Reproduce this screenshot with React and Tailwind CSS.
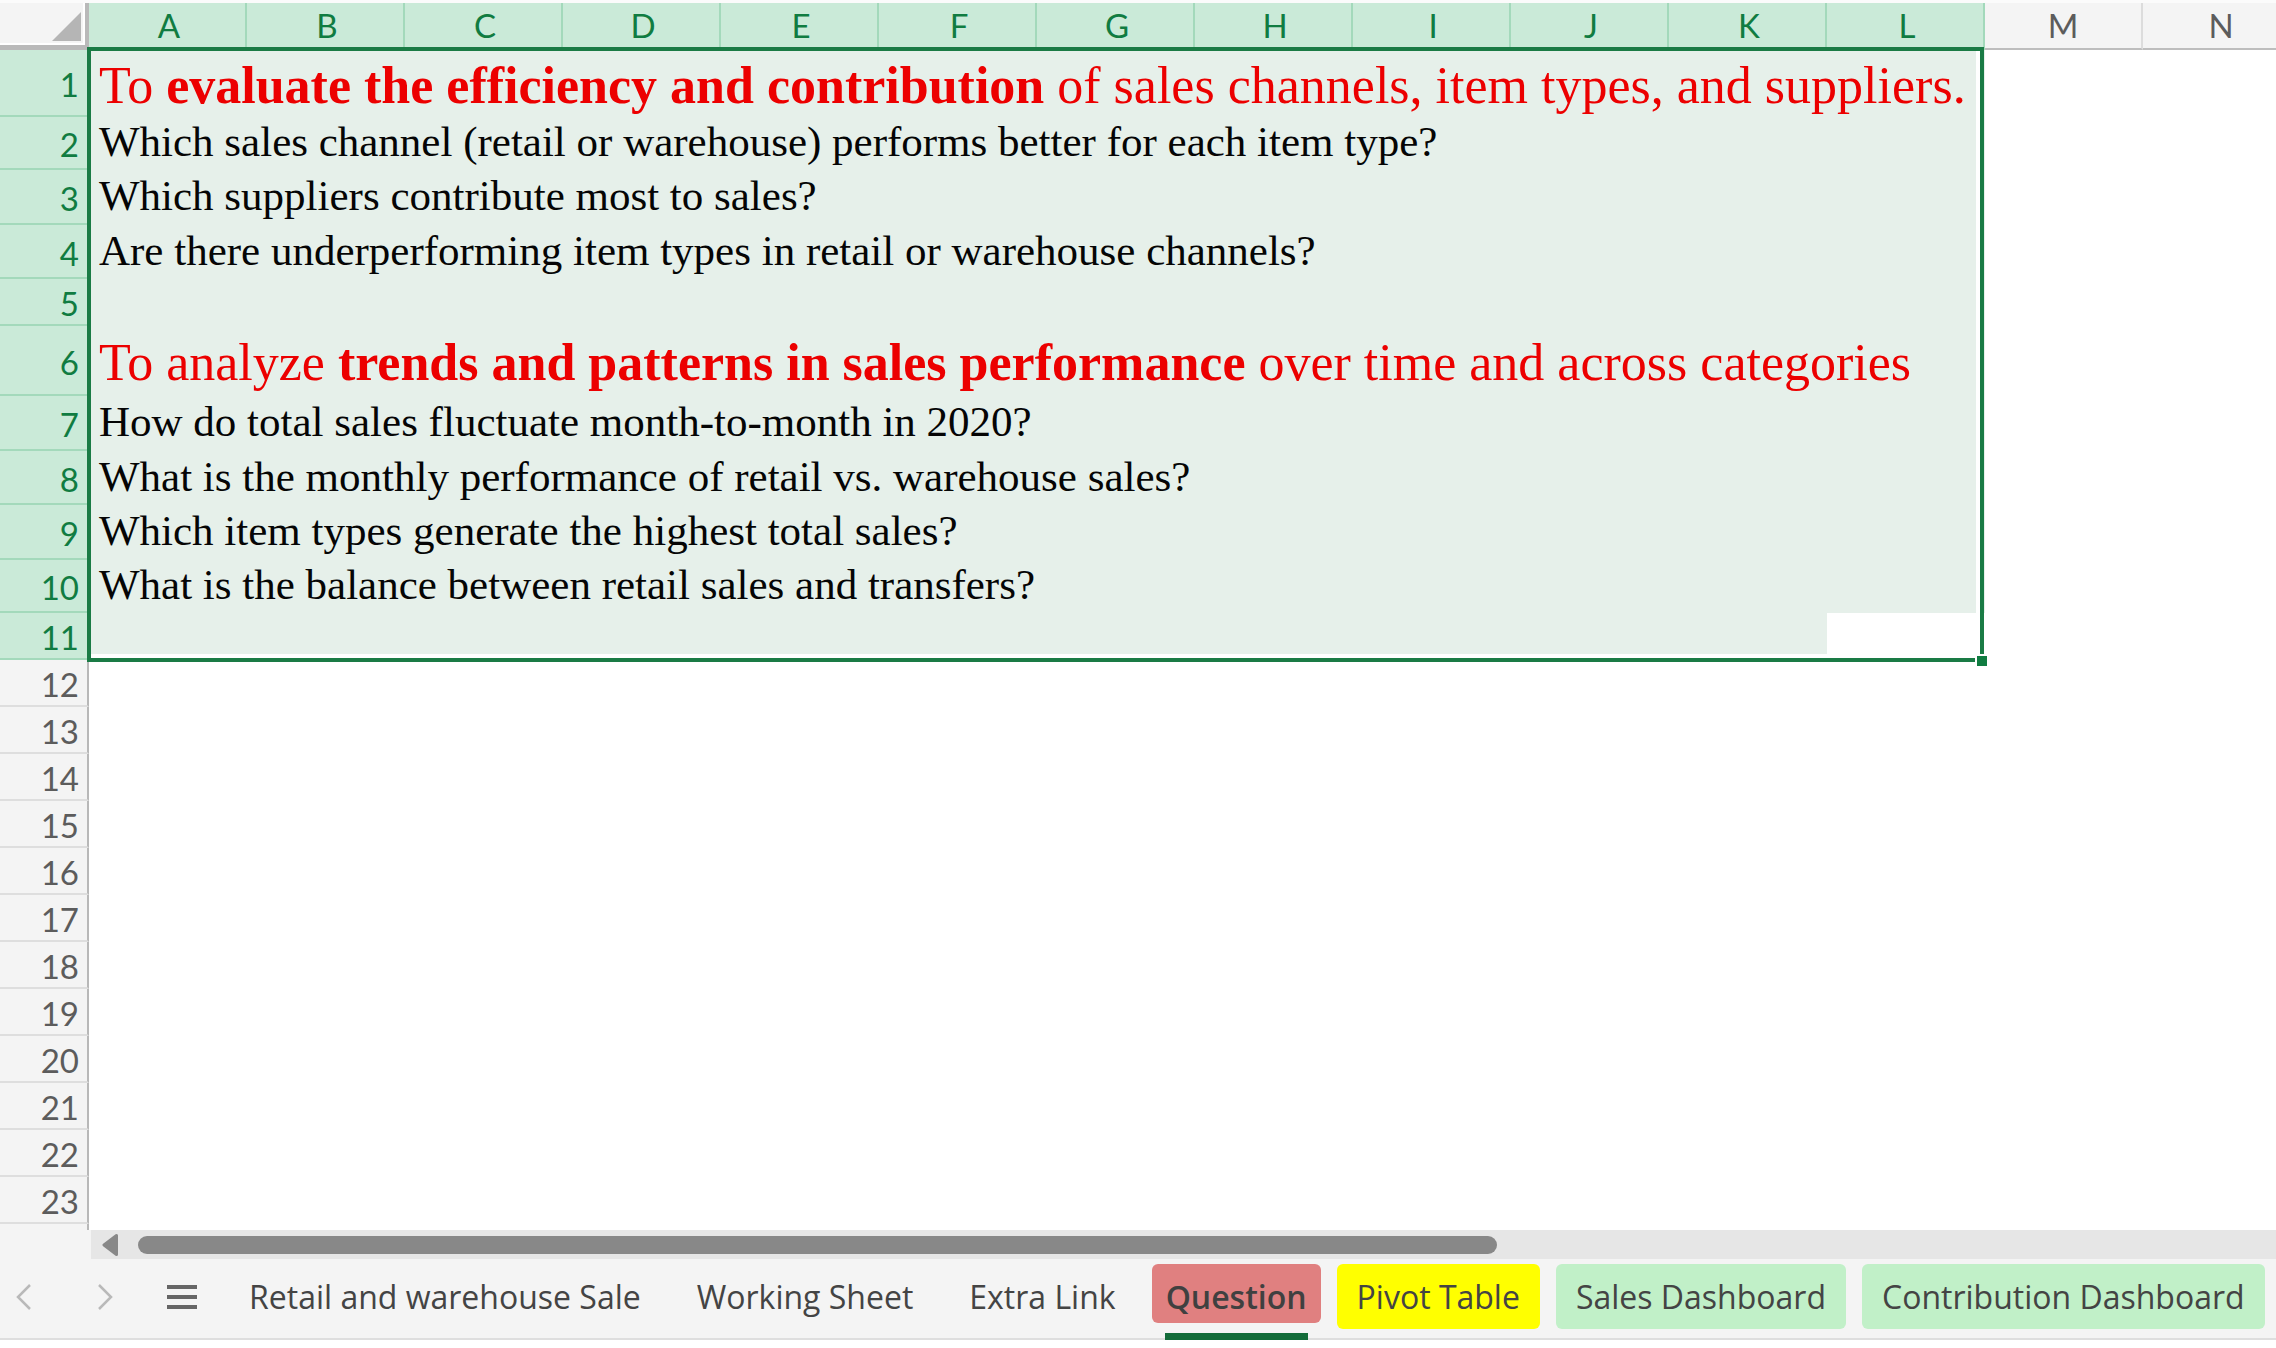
import React from "react";

const columns = ["A", "B", "C", "D", "E", "F", "G", "H", "I", "J", "K", "L", "M", "N"];
const SELECTED_COLUMNS = 12;
const SELECTED_ROWS = 11;

const rows = [
  {
    height: "h-[67px]",
    heading: true,
    content: (
      <>
        To <b>evaluate the efficiency and contribution</b> of sales channels, item types, and suppliers.
      </>
    ),
  },
  { height: "h-[53px]", content: "Which sales channel (retail or warehouse) performs better for each item type?" },
  { height: "h-[55px]", content: "Which suppliers contribute most to sales?" },
  { height: "h-[54px]", content: "Are there underperforming item types in retail or warehouse channels?" },
  { height: "h-[47px]" },
  {
    height: "h-[70px]",
    heading: true,
    content: (
      <>
        To analyze <b>trends and patterns in sales performance</b> over time and across categories
      </>
    ),
  },
  { height: "h-[55px]", content: "How do total sales fluctuate month-to-month in 2020?" },
  { height: "h-[54px]", content: "What is the monthly performance of retail vs. warehouse sales?" },
  { height: "h-[55px]", content: "Which item types generate the highest total sales?" },
  { height: "h-[53px]", content: "What is the balance between retail sales and transfers?" },
  { height: "h-[47px]", activeCell: true },
  ...Array.from({ length: 12 }, () => ({ height: "h-[47px]" })),
];

const tabs = [
  { name: "Retail and warehouse Sale", color: "" },
  { name: "Working Sheet", color: "" },
  { name: "Extra Link", color: "" },
  { name: "Question", active: true },
  { name: "Pivot Table", color: "bg-[#ffff00]" },
  { name: "Sales Dashboard", color: "bg-[#c1f0c8]" },
  { name: "Contribution Dashboard", color: "bg-[#c1f0c8]" },
];

function ColumnHeader({ name, selected }) {
  return (
    <th
      scope="col"
      className={
        selected
          ? "border-r-2 border-[#a3d9bb] bg-[#caead8] pb-[2px] pl-1 font-normal text-[#107c41]"
          : "border-r-2 border-b-2 border-r-[#dcdcdc] border-b-[#bdbdbd] bg-[#f4f4f4] font-normal text-[#5c5c5c]"
      }
    >
      {name}
    </th>
  );
}

function Row({ number, row }) {
  const selected = number <= SELECTED_ROWS;
  return (
    <tr className={row.height}>
      <th
        scope="row"
        className={
          selected
            ? "border-b-2 border-[#a3d9bb] bg-[#caead8] pt-1 pr-[10px] text-right font-normal text-[#107c41]"
            : "border-r-2 border-b-2 border-r-[#b8b8b8] border-b-[#dedede] bg-[#f4f4f4] pt-1 pr-2 text-right font-normal text-[#5c5c5c]"
        }
      >
        {number}
      </th>
      {!selected && <td colSpan={14} />}
      {selected && row.activeCell && (
        <>
          <td colSpan={11} className="bg-[#e6f0ea]" />
          <td className="bg-white" />
          <td colSpan={2} />
        </>
      )}
      {selected && !row.activeCell && (
        <>
          <td
            colSpan={12}
            className={
              row.heading
                ? "overflow-hidden bg-[#e6f0ea] pt-1 pl-[10px] font-['Liberation_Serif',serif] text-[52px] leading-none whitespace-nowrap text-[#ec0000]"
                : "overflow-hidden bg-[#e6f0ea] pb-1 pl-[10px] font-['Liberation_Serif',serif] text-[43px] leading-none whitespace-nowrap text-[#050505]"
            }
          >
            {row.content}
          </td>
          <td colSpan={2} />
        </>
      )}
    </tr>
  );
}

function Sheet() {
  return (
    <div className="min-h-0 flex-1 overflow-hidden bg-[linear-gradient(to_right,#f4f4f4_87px,#b8b8b8_87px,#b8b8b8_89px,white_89px)]">
      <div className="relative w-max border-t-[3px] border-[#fbfbfb]">
        <table className="table-fixed border-separate border-spacing-0 font-[Lato,sans-serif] text-[33px] leading-none">
          <colgroup>
            <col className="w-[89px]" />
            {columns.map((c) => (
              <col key={c} className="w-[158px]" />
            ))}
          </colgroup>
          <thead>
            <tr className="h-[47px]">
              <td className="border-r-4 border-b-[5px] border-[#b9b9b9] bg-[#f4f4f4] p-0">
                <button
                  type="button"
                  aria-label="Select all"
                  className="flex h-[42px] w-full items-end justify-end border-r-2 border-b-2 border-white pr-[2px] pb-[2px]"
                >
                  <svg viewBox="0 0 29 29" className="size-[29px]" fill="#b5b5b5">
                    <path d="M29 0V29H0Z" />
                  </svg>
                </button>
              </td>
              {columns.map((c, i) => (
                <ColumnHeader key={c} name={c} selected={i < SELECTED_COLUMNS} />
              ))}
            </tr>
          </thead>
          <tbody>
            {rows.map((row, i) => (
              <Row key={i} number={i + 1} row={row} />
            ))}
          </tbody>
        </table>
        {/* Selection outline around A1:L11 with its fill handle */}
        <div className="pointer-events-none absolute top-[44px] left-[87px] h-[615px] w-[1897px] border-4 border-[#1a7b45]">
          <div className="h-full border-r-4 border-b-4 border-white" />
          <div className="absolute -right-[9px] -bottom-[10px] size-[14px] border-2 border-white bg-[#107c41]" />
        </div>
      </div>
    </div>
  );
}

function HorizontalScroll() {
  return (
    <div className="flex h-[29px] shrink-0 bg-[#f4f4f4] pl-[91px]">
      <div className="flex flex-1 items-center bg-[#e6e6e6] pl-[11px]">
        <button type="button" aria-label="Scroll left" className="mr-[19px] shrink-0">
          <svg viewBox="0 0 17 24" className="h-6 w-[17px]" fill="#888888" stroke="#888888" strokeWidth="3" strokeLinejoin="round">
            <path d="M2 12L14.500 2.500V21.500Z" />
          </svg>
        </button>
        <div className="h-[18px] w-5/8 rounded-full bg-[#888888]" />
      </div>
    </div>
  );
}

function Tab({ tab }) {
  if (tab.active) {
    return (
      <div className="relative h-full">
        <button
          type="button"
          aria-current="page"
          className="flex h-[59px] items-start rounded-md bg-[#e08080] px-[14px] leading-[65px] font-semibold text-[#404040]"
        >
          {tab.name}
        </button>
        <div className="absolute inset-x-[13px] -bottom-[2px] h-[7px] bg-[#146c3a]" />
      </div>
    );
  }
  return (
    <button
      type="button"
      className={`${tab.color} h-[65px] rounded-md px-5 leading-[65px] whitespace-nowrap text-[#444444]`}
    >
      {tab.name}
    </button>
  );
}

function SheetTabs() {
  return (
    <nav
      aria-label="Sheets"
      className="mb-2 flex h-[81px] shrink-0 border-b-2 border-[#dedede] bg-[#f4f4f4] pt-[5px] font-['Open_Sans',sans-serif] text-[32px]"
    >
      <div className="flex h-[65px] items-center">
        <button type="button" aria-label="Previous sheet" className="ml-4">
          <svg viewBox="0 0 16 26" className="h-[26px] w-4" fill="none" stroke="#b9b9b9" strokeWidth="2.500">
            <path d="M14 1L2 13L14 25" />
          </svg>
        </button>
        <button type="button" aria-label="Next sheet" className="ml-[65px]">
          <svg viewBox="0 0 16 26" className="h-[26px] w-4" fill="none" stroke="#b9b9b9" strokeWidth="2.500">
            <path d="M2 1L14 13L2 25" />
          </svg>
        </button>
        <button type="button" aria-label="All sheets" className="ml-[54px]">
          <svg viewBox="0 0 30 26" className="h-[26px] w-[30px]" fill="none" stroke="#666666" strokeWidth="4">
            <path d="M0 3H30M0 13H30M0 23H30" />
          </svg>
        </button>
      </div>
      <div className="ml-8 flex gap-4">
        {tabs.map((tab) => (
          <Tab key={tab.name} tab={tab} />
        ))}
      </div>
    </nav>
  );
}

export default function App() {
  return (
    <main className="flex h-screen flex-col overflow-hidden bg-white">
      <Sheet />
      <HorizontalScroll />
      <SheetTabs />
    </main>
  );
}
